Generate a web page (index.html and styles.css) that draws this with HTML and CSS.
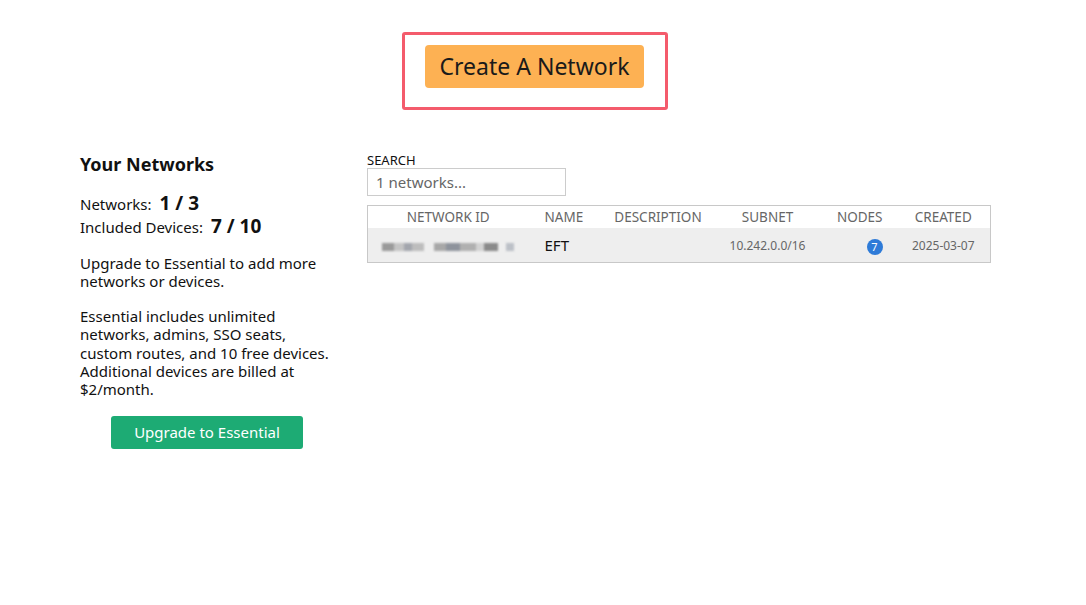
FILE: index.html
```html
<!DOCTYPE html>
<html lang="en">
<head>
<meta charset="utf-8">
<title>Networks</title>
<link rel="stylesheet" href="styles.css">
</head>
<body>
<header class="top">
  <div class="highlight">
    <button class="create-btn">Create A Network</button>
  </div>
</header>
<main class="main">
  <aside class="side">
    <h2 class="side-title">Your Networks</h2>
    <div class="stat"><span class="stat-label">Networks:</span><span class="stat-value">1 / 3</span></div>
    <div class="stat"><span class="stat-label">Included Devices:</span><span class="stat-value">7 / 10</span></div>
    <p class="note">Upgrade to Essential to add more networks or devices.</p>
    <p class="note">Essential includes unlimited networks, admins, SSO seats, custom routes, and 10 free devices. Additional devices are billed at $2/month.</p>
    <div class="upgrade-wrap"><button class="upgrade-btn">Upgrade to Essential</button></div>
  </aside>
  <section class="content">
    <label class="search-label" for="search">SEARCH</label>
    <input class="search-input" id="search" type="text" placeholder="1 networks...">
    <table class="net-table">
      <thead>
        <tr>
          <th class="c-id">NETWORK ID</th>
          <th class="c-name">NAME</th>
          <th class="c-desc">DESCRIPTION</th>
          <th class="c-subnet">SUBNET</th>
          <th class="c-nodes">NODES</th>
          <th class="c-created">CREATED</th>
        </tr>
      </thead>
      <tbody>
        <tr>
          <td class="c-id"><span class="blur-id"><i class="b1"></i><i class="b2"></i><i class="b3"></i><i class="b4"></i><i class="b5"></i><i class="b6"></i><i class="b7"></i><i class="b8"></i><i class="b9"></i><i class="b10"></i></span></td>
          <td class="c-name name-cell">EFT</td>
          <td class="c-desc"></td>
          <td class="c-subnet small-cell">10.242.0.0/16</td>
          <td class="c-nodes"><span class="badge">7</span></td>
          <td class="c-created small-cell">2025-03-07</td>
        </tr>
      </tbody>
    </table>
  </section>
</main>
</body>
</html>
```
FILE: styles.css
```css
* { box-sizing: border-box; }
html, body { margin: 0; padding: 0; background: #fff; }
body {
  font-family: "Noto Sans", "Open Sans", sans-serif;
  color: #111;
  font-size: 15px;
}
.top {
  display: flex;
  justify-content: center;
  padding-top: 32px;
}
.highlight {
  border: 3px solid #f45b6c;
  border-radius: 3px;
  padding: 10px 21px 19px 20px;
  margin-right: 16px;
}
.create-btn {
  display: block;
  font-family: inherit;
  font-size: 23px;
  color: #1a1a1a;
  background: #fdb153;
  border: none;
  border-radius: 4px;
  width: 219px;
  height: 43px;
  padding: 0;
  line-height: 43px;
}
.main {
  display: flex;
  margin-top: 40px;
  padding-left: 80px;
}
.side {
  width: 257px;
  flex: none;
}
.side-title {
  margin: 2px 0 16px;
  font-size: 18px;
  font-weight: 700;
  line-height: 24px;
}
.stat {
  display: flex;
  align-items: baseline;
  height: 23px;
  line-height: 23px;
}
.stat-label { font-size: 15px; }
.stat-value {
  font-size: 19px;
  font-weight: 700;
  margin-left: 8px;
}
.note {
  margin: 16px 0 0;
  line-height: 18.4px;
  font-size: 15px;
}
.upgrade-wrap {
  width: 254px;
  display: flex;
  justify-content: center;
  margin-top: 17px;
}
.upgrade-btn {
  font-family: inherit;
  font-size: 15px;
  color: #fff;
  background: #1dab74;
  border: none;
  border-radius: 3px;
  width: 192px;
  height: 33px;
  padding: 0;
}
.content {
  margin-left: 30px;
  margin-top: 2px;
  width: 623px;
  display: flex;
  flex-direction: column;
  align-items: flex-start;
}
.search-label {
  font-size: 13px;
  line-height: 16px;
  color: #111;
}
.search-input {
  width: 199px;
  height: 28px;
  border: 1px solid #ccc;
  border-radius: 0;
  padding: 0 8px;
  font-family: inherit;
  font-size: 15px;
  color: #333;
  margin: 0;
}
.search-input::placeholder { color: #666; }
.net-table {
  margin-top: 9px;
  width: 623px;
  border-collapse: collapse;
  border: 1px solid #c8c8c8;
  table-layout: fixed;
}
.net-table th {
  font-weight: 400;
  font-size: 13.5px;
  color: #666;
  height: 22px;
  padding: 0;
  line-height: 22px;
}
.net-table td {
  background: #eee;
  height: 34px;
  padding: 0;
}
.c-id { width: 161px; text-align: center; }
.c-name { width: 71px; text-align: left; padding-left: 16px !important; }
.c-desc { width: 117px; text-align: center; }
.c-subnet { width: 102px; text-align: center; }
.c-nodes { width: 78px; text-align: right; padding-right: 14px !important; }
.c-created { width: 94px; text-align: center; }
.name-cell { font-size: 15px; color: #111; }
.small-cell { font-size: 12px; color: #666; padding-top: 2px !important; }
.badge {
  display: inline-flex;
  align-items: center;
  justify-content: center;
  width: 16px;
  height: 16px;
  border-radius: 50%;
  background: #2e7bd8;
  color: #fff;
  font-size: 11px;
  line-height: 1;
  vertical-align: middle;
}
.blur-id {
  display: inline-flex;
  align-items: center;
  height: 12px;
  filter: blur(0.8px);
  vertical-align: middle;
  margin-left: 0;
}
.blur-id i { display: block; height: 8px; }
.b1 { width: 12px; background: #9a9a9a; }
.b2 { width: 10px; background: #c4c4c4; }
.b3 { width: 8px; background: #a3a6ad; }
.b4 { width: 12px; background: #bdbdbd; margin-right: 10px; }
.b5 { width: 12px; background: #a8a8a8; }
.b6 { width: 14px; background: #8e939c; }
.b7 { width: 16px; background: #b0b0b0; }
.b8 { width: 8px; background: #d2d2d2; }
.b9 { width: 14px; background: #8a8a8a; margin-right: 8px; }
.b10 { width: 8px; background: #bcc0c7; }
```
